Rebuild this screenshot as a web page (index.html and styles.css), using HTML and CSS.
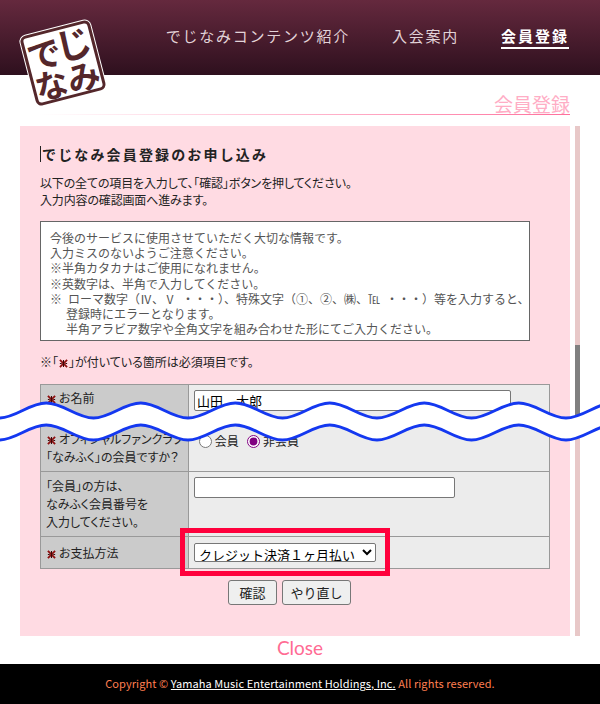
FILE: index.html
```html
<!DOCTYPE html>
<html lang="ja">
<head>
    <meta charset="UTF-8">
    <title>会員登録</title>
    <link rel="stylesheet" href="styles.css">
</head>
<body>
    <svg class="defs" width="0" height="0">
        <symbol id="mark" viewBox="0 0 10 10">
            <path d="M1 1L9 9M9 1L1 9" stroke="#8f1010" stroke-width="2" fill="none"/>
            <path d="M5 1V9M1 5H3M7 5H9" stroke="#3a0808" stroke-width="1.2" fill="none"/>
        </symbol>
    </svg>

    <header class="header">
        <div class="logo">
            <span class="logo-de">で</span>
            <span class="logo-ji">じ</span>
            <span class="logo-nami">なみ</span>
        </div>
        <nav class="nav">
            <a class="nav-contents">でじなみコンテンツ紹介</a>
            <a class="nav-join">入会案内</a>
            <a class="nav-current">会員登録</a>
        </nav>
    </header>

    <div class="page-title"><h2>会員登録</h2></div>

    <div class="modal">
        <main class="card">
            <h3 class="form-title">でじなみ会員登録のお申し込み</h3>
            <p class="lead">以下の全ての項目を入力して、「確認」ボタンを押してください。<br>入力内容の確認画面へ進みます。</p>
            <div class="notice">
                今後のサービスに使用させていただく大切な情報です。<br>
                入力ミスのないようご注意ください。<br>
                ※半角カタカナはご使用になれません。<br>
                ※英数字は、半角で入力してください。<br>
                ※ ローマ数字（Ⅳ、Ⅴ ・・・）、特殊文字（①、②、㈱、℡ ・・・）等を入力すると、<br>
                <span class="indent">登録時にエラーとなります。</span><br>
                <span class="indent">半角アラビア数字や全角文字を組み合わせた形にてご入力ください。</span>
            </div>
            <p class="required">※「<svg class="mark"><use href="#mark"/></svg>」が付いている箇所は必須項目です。</p>

            <form>
                <table class="form-table">
                    <tr class="row-name">
                        <th><svg class="mark"><use href="#mark"/></svg>お名前</th>
                        <td><input class="text-wide" type="text" value="山田　太郎"></td>
                    </tr>
                    <tr class="row-member">
                        <th><svg class="mark"><use href="#mark"/></svg>オフィシャルファンクラブ<br>「なみふく」の会員ですか？</th>
                        <td>
                            <label class="radio"><input type="radio" name="member"> 会員</label>
                            <label class="radio"><input type="radio" name="member" checked> 非会員</label>
                        </td>
                    </tr>
                    <tr class="row-number">
                        <th>「会員」の方は、<br>なみふく会員番号を<br>入力してください。</th>
                        <td><input class="text-number" type="text"></td>
                    </tr>
                    <tr class="row-pay">
                        <th><svg class="mark"><use href="#mark"/></svg>お支払方法</th>
                        <td>
                            <select class="pay-select">
                                <option>クレジット決済１ヶ月払い</option>
                            </select>
                        </td>
                    </tr>
                </table>
                <div class="buttons">
                    <button class="btn-confirm" type="button">確認</button>
                    <button class="btn-reset" type="reset">やり直し</button>
                </div>
            </form>
            <div class="highlight"></div>
        </main>
        <div class="scrollbar"><div class="thumb"></div></div>
    </div>

    <div class="close">Close</div>

    <footer class="footer">
        Copyright © <a>Yamaha Music Entertainment Holdings, Inc.</a> All rights reserved.
    </footer>

    <!-- torn edge over the page -->
    <svg class="tear" width="600" height="60" viewBox="0 0 600 60">
        <path class="tear-fill" d="M-1 26 C16 26 29.25 11 46.25 11 S76.5 26 93.5 26 S123.75 11 140.75 11 S171 26 188 26 S218.25 11 235.25 11 S265.5 26 282.5 26 S312.75 11 329.75 11 S360 26 377 26 S407.25 11 424.25 11 S454.5 26 471.5 26 S501.75 11 518.75 11 S549 26 566 26 S596.25 11 613.25 11 L613.25 33 C596.25 33 583 48 566 48 S535.75 33 518.75 33 S488.5 48 471.5 48 S441.25 33 424.25 33 S394 48 377 48 S346.75 33 329.75 33 S299.5 48 282.5 48 S252.25 33 235.25 33 S205 48 188 48 S157.75 33 140.75 33 S110.5 48 93.5 48 S63.25 33 46.25 33 S16 48 -1 48 Z"/>
        <path id="wave" class="tear-line" d="M-1 26 C16 26 29.25 11 46.25 11 S76.5 26 93.5 26 S123.75 11 140.75 11 S171 26 188 26 S218.25 11 235.25 11 S265.5 26 282.5 26 S312.75 11 329.75 11 S360 26 377 26 S407.25 11 424.25 11 S454.5 26 471.5 26 S501.75 11 518.75 11 S549 26 566 26 S596.25 11 613.25 11"/>
        <use href="#wave" y="22"/>
    </svg>
</body>
</html>
```

FILE: styles.css
```css
* {
    box-sizing: border-box;
}
body {
    margin: 0;
    height: 704px;
    overflow: hidden;
    position: relative;
    display: flex;
    flex-direction: column;
    background-color: #fff;
    color: #222;
    font-family: "Noto Sans CJK JP", "Liberation Sans", sans-serif;
    font-size: 12px;
}
.defs {
    position: absolute;
}
.header {
    height: 75px;
    flex: none;
    background: linear-gradient(#65293e, #2e101e);
    display: flex;
    justify-content: flex-end;
    padding: 26px 31px 0 0;
}
.logo {
    position: absolute;
    left: 27px;
    top: 27px;
    width: 72px;
    height: 72px;
    background-color: #fff;
    border: 3px solid #54272b;
    border-radius: 6px;
    box-shadow: 0 0 0 1px #fff;
    transform: rotate(-14.5deg);
    color: #54272b;
    font-weight: 700;
}
.logo-de, .logo-ji, .logo-nami {
    position: absolute;
    line-height: 1;
    white-space: nowrap;
}
.logo-de {
    left: 0;
    top: 2px;
    font-size: 34px;
}
.logo-ji {
    left: 30px;
    top: -3px;
    font-size: 36px;
}
.logo-nami {
    left: 0;
    top: 34px;
    font-size: 33px;
}
.nav {
    display: flex;
    gap: 42px;
    color: #e2d3d8;
    font-size: 15px;
    letter-spacing: 1.75px;
    line-height: 20px;
}
.nav-current {
    color: #fff;
    font-weight: 700;
    height: 23px;
    border-bottom: 2px solid #fff;
    letter-spacing: 2px;
}
.page-title {
    height: 40px;
    margin: 0 30px 0 20px;
    flex: none;
    position: relative;
    display: flex;
    justify-content: flex-end;
    align-items: flex-end;
}
.page-title::after {
    content: "";
    position: absolute;
    left: 20px;
    right: 0;
    bottom: 0;
    height: 1px;
    background: linear-gradient(to right, #fff, #ff6f9c);
}
.page-title h2 {
    margin: 0;
    font-size: 19px;
    font-weight: 400;
    line-height: 22px;
    color: #ffadc5;
}
.modal {
    height: 510px;
    margin: 11px 20px 0;
    flex: none;
    display: flex;
    gap: 5px;
}
.card {
    width: 550px;
    background-color: #ffdbe3;
    padding: 20px 20px 0;
    position: relative;
}
.form-title {
    margin: 0;
    height: 16px;
    padding-left: 1px;
    border-left: 1px solid #222;
    font-size: 14px;
    line-height: 16px;
    letter-spacing: 2.15px;
    white-space: nowrap;
}
.lead {
    margin: 12px 0 0;
    line-height: 17px;
    font-feature-settings: "palt";
    letter-spacing: -0.15px;
}
.notice {
    width: 490px;
    height: 120px;
    margin-top: 13px;
    padding: 8px 9px 0;
    background-color: #fff;
    border: 1px solid #666;
    color: #555;
    font-size: 12px;
    line-height: 15.2px;
    word-spacing: 3.3px;
    white-space: nowrap;
}
.indent {
    margin-left: 16px;
}
.required {
    margin: 12px 0 0;
    line-height: 17px;
    font-feature-settings: "palt";
}
.mark {
    width: 9px;
    height: 9px;
    margin: 0 3px 0 1px;
    vertical-align: -1px;
}
.required .mark {
    margin: 0 1px;
}
form {
    margin-top: 14px;
}
.form-table {
    width: 510px;
    border-collapse: collapse;
    table-layout: fixed;
    font-feature-settings: "palt";
}
.form-table th, .form-table td {
    border: 1px solid #999;
    padding: 0 5px;
    text-align: left;
    font-weight: 400;
    line-height: 18px;
}
.form-table th {
    width: 148px;
    background-color: #cbcbcb;
    vertical-align: middle;
    white-space: nowrap;
}
.form-table td {
    background-color: #ececec;
}
.row-name th, .row-name td {
    height: 39px;
    vertical-align: top;
    padding-top: 5px;
}
.row-name th {
    padding-top: 4px;
}
.row-member th, .row-member td {
    height: 48px;
}
.row-member td {
    vertical-align: top;
    padding-top: 8px;
}
.row-number th, .row-number td {
    height: 65px;
}
.row-number td {
    vertical-align: top;
    padding-top: 5px;
}
.row-pay th, .row-pay td {
    height: 32px;
}
input[type="text"] {
    height: 21px;
    padding: 0 2px;
    border: 1px solid #777;
    border-radius: 2px;
    background-color: #fff;
    font-family: inherit;
    font-size: 13px;
}
.text-wide {
    width: 317px;
}
.text-number {
    width: 261px;
}
.radio {
    margin-left: 5px;
    margin-right: 1px;
}
.radio input {
    width: 13px;
    height: 13px;
    margin: 0;
    accent-color: #800080;
    vertical-align: -2px;
}
.pay-select {
    display: block;
    width: 182px;
    height: 19px;
    font-family: inherit;
    font-size: 13px;
    background-color: #fff;
    border: 1px solid #777;
    border-radius: 2px;
    padding: 0;
}
.buttons {
    display: flex;
    justify-content: center;
    gap: 5px;
    margin-top: 11px;
    padding-right: 11px;
}
.buttons button {
    height: 25px;
    background-color: #efefef;
    border: 1px solid #777;
    border-radius: 3px;
    font-family: inherit;
    font-size: 13px;
    color: #222;
}
.btn-confirm {
    width: 49px;
    padding: 0;
}
.btn-reset {
    width: 69px;
    padding: 0;
}
.highlight {
    position: absolute;
    left: 160px;
    top: 402px;
    width: 210px;
    height: 48px;
    border: 5px solid #ff003c;
}
.scrollbar {
    width: 5px;
    background-color: #e8c8c8;
    position: relative;
}
.thumb {
    position: absolute;
    top: 219px;
    left: 0;
    width: 5px;
    height: 80px;
    background-color: #808080;
}
.close {
    height: 28px;
    flex: none;
    text-align: center;
    color: #ff6b93;
    font-family: "Lato", "Liberation Sans", sans-serif;
    font-size: 19px;
    line-height: 24px;
}
.footer {
    height: 40px;
    flex: none;
    background-color: #000;
    color: #ff7f50;
    text-align: center;
    font-size: 11px;
    line-height: 39px;
    letter-spacing: 0.08px;
}
.footer a {
    color: #fff;
    text-decoration: underline;
}
.tear {
    position: absolute;
    left: 0;
    top: 392px;
}
.tear-fill {
    fill: #fff;
}
.tear-line {
    fill: none;
    stroke: #1438f0;
    stroke-width: 3;
}
```
